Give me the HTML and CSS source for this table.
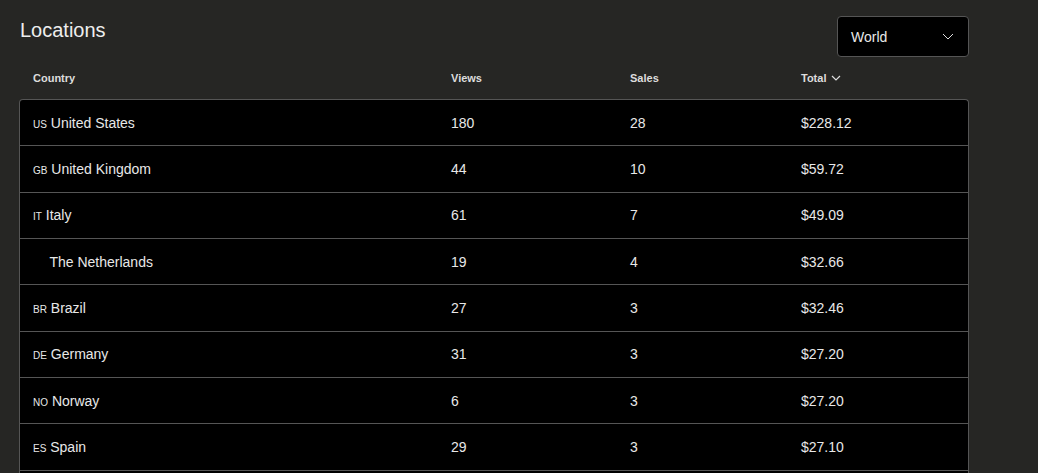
FILE: index.html
```html
<!DOCTYPE html>
<html lang="en">
<head>
  <meta charset="UTF-8">
  <title>Locations</title>
  <link rel="stylesheet" href="styles.css">
</head>
<body>

<div class="wrap">
  <div class="top">
    <h1>Locations</h1>
    <div class="select">
      <span>World</span>
      <svg width="12" height="7" viewBox="0 0 12 7"><path d="M1 1 L6 6 L11 1" fill="none" stroke="#ddd" stroke-width="1"/></svg>
    </div>
  </div>

  <div class="row head">
    <div>Country</div>
    <div>Views</div>
    <div>Sales</div>
    <div>Total <svg width="10" height="6" viewBox="0 0 10 6"><path d="M1 1 L5 5 L9 1" fill="none" stroke="#ddd" stroke-width="1.2"/></svg></div>
  </div>

  <div class="table">
    <div class="row"><div><span class="code">us</span> United States</div><div>180</div><div>28</div><div>$228.12</div></div>
    <div class="row"><div><span class="code">gb</span> United Kingdom</div><div>44</div><div>10</div><div>$59.72</div></div>
    <div class="row"><div><span class="code">it</span> Italy</div><div>61</div><div>7</div><div>$49.09</div></div>
    <div class="row"><div><span class="code blank">nl</span> The Netherlands</div><div>19</div><div>4</div><div>$32.66</div></div>
    <div class="row"><div><span class="code">br</span> Brazil</div><div>27</div><div>3</div><div>$32.46</div></div>
    <div class="row"><div><span class="code">de</span> Germany</div><div>31</div><div>3</div><div>$27.20</div></div>
    <div class="row"><div><span class="code">no</span> Norway</div><div>6</div><div>3</div><div>$27.20</div></div>
    <div class="row"><div><span class="code">es</span> Spain</div><div>29</div><div>3</div><div>$27.10</div></div>
  </div>
</div>

</body>
</html>
```

FILE: styles.css
```css
body {
  margin: 0;
  font-family: "Liberation Sans", Arial, sans-serif;
  background-color: #262624;
  color: #e8e8e8;
  overflow: hidden;
}
.wrap {
  width: 950px;
  padding: 16px 0 0 19px;
}
.top {
  display: flex;
  justify-content: space-between;
  align-items: flex-start;
}
h1 {
  margin: 2px 0 0 1px;
  font-size: 20px;
  font-weight: normal;
  line-height: 24px;
  color: #eee;
}
.select {
  width: 103px;
  height: 39px;
  padding: 0 14px 0 13px;
  background: #000;
  border: 1px solid #555;
  border-radius: 4px;
  display: flex;
  align-items: center;
  justify-content: space-between;
  font-size: 14px;
}
.row {
  display: grid;
  grid-template-columns: 418px 179px 171px 1fr;
  align-items: center;
  height: 45.33px;
  border-bottom: 1px solid #555;
  font-size: 14px;
}
.row > div {
  padding-left: 13px;
}
.head {
  height: 42px;
  border-bottom: none;
  padding: 0 1px;
  font-size: 11px;
  font-weight: bold;
  color: #ddd;
}
.head svg {
  margin-left: 1px;
  vertical-align: 1px;
}
.table {
  background: #000;
  border: 1px solid #555;
  border-bottom: none;
  border-radius: 4px 4px 0 0;
  padding-bottom: 20px;
}
.code {
  font-variant: small-caps;
}
.blank {
  visibility: hidden;
}
```
